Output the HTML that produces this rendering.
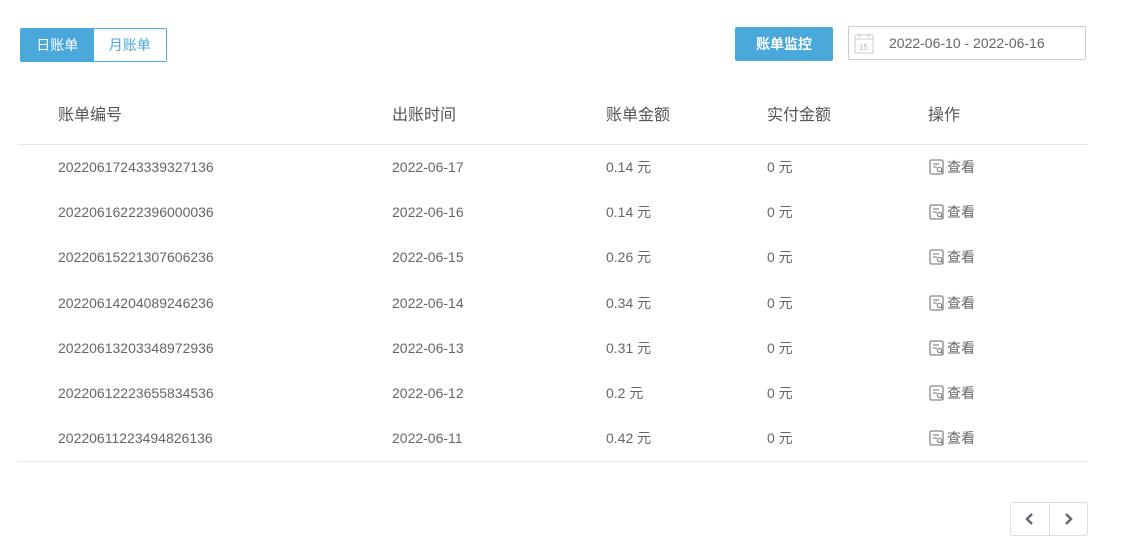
<!DOCTYPE html>
<html><head><meta charset="utf-8"><style>
*{margin:0;padding:0;box-sizing:border-box}
body{width:1134px;height:550px;background:#fff;font-family:"Liberation Sans","Noto Sans CJK SC",sans-serif;position:relative;overflow:hidden;color:#666}
.abs{position:absolute}
.tabs{left:20px;top:28px;width:147px;height:34px;border:1px solid #4aa9da;border-radius:2px;display:flex;font-size:14px}
.tabs div{flex:1;display:flex;align-items:center;justify-content:center}
.t1{background:#4aa9da;color:#fff}
.t2{color:#4aa9da}
.btn{left:735px;top:27px;width:98px;height:34px;background:#4aa9da;color:#fff;border-radius:2px;font-size:14px;font-weight:bold;display:flex;align-items:center;justify-content:center}
.date{left:848px;top:26px;width:238px;height:34px;border:1px solid #ccc;border-radius:2px;font-size:14px;color:#666}
.date span{position:absolute;left:40px;top:8px}
.hline{left:18px;width:1070px;height:1px;background:#e8e8e8}
.row{position:absolute;left:0;width:1134px;font-size:14px;color:#666;height:20px;line-height:20px}
.row div{position:absolute;top:0;height:20px;line-height:20px;white-space:nowrap}
.hd{font-size:16px;color:#555}
.c1{left:58px}.c2{left:392px}.c3{left:606px}.c4{left:767px}.c5{left:929px}
.ico{display:inline-block;vertical-align:-3px;margin-right:2px}
.pg{left:1010px;top:502px;width:78px;height:34px;border:1px solid #ddd;border-radius:3px;display:flex}
.pg div{flex:1;display:flex;align-items:center;justify-content:center}
.pg div:first-child{border-right:1px solid #ddd}
</style></head><body>
<div class="abs tabs"><div class="t1">日账单</div><div class="t2">月账单</div></div>
<div class="abs btn">账单监控</div>
<div class="abs date">
<svg class="abs" style="left:5px;top:5px" width="20" height="22" viewBox="0 0 20 22"><rect x="1" y="3" width="18" height="18" fill="none" stroke="#ccc"/><line x1="1" y1="7" x2="19" y2="7" stroke="#ccc"/><line x1="5" y1="1" x2="5" y2="5" stroke="#ccc"/><line x1="15" y1="1" x2="15" y2="5" stroke="#ccc"/><text x="5" y="18" font-size="8" fill="#bbb" font-family="Liberation Sans">15</text></svg>
<span>2022-06-10 - 2022-06-16</span></div>
<div class="row hd" style="top:106px"><div class="c1">账单编号</div><div class="c2">出账时间</div><div class="c3">账单金额</div><div class="c4">实付金额</div><div class="c5" style="left:928px">操作</div></div>
<div class="abs hline" style="top:144px"></div>
<div class="abs hline" style="top:461px"></div>
<div id="rows"></div>
<div class="abs pg"><div><svg width="10" height="12"><path d="M7 1L2 6L7 11" fill="none" stroke="#667" stroke-width="2.5"/></svg></div><div><svg width="10" height="12"><path d="M3 1L8 6L3 11" fill="none" stroke="#667" stroke-width="2.5"/></svg></div></div>
<script>
var d=[["20220617243339327136","2022-06-17","0.14 元"],["20220616222396000036","2022-06-16","0.14 元"],["20220615221307606236","2022-06-15","0.26 元"],["20220614204089246236","2022-06-14","0.34 元"],["20220613203348972936","2022-06-13","0.31 元"],["20220612223655834536","2022-06-12","0.2 元"],["20220611223494826136","2022-06-11","0.42 元"]];
var ic='<svg class="ico" width="16" height="16" viewBox="0 0 16 16"><rect x="1" y="1" width="13" height="14" rx="1.5" fill="none" stroke="#888" stroke-width="1.3"/><line x1="4" y1="5" x2="10" y2="5" stroke="#888" stroke-width="1.2"/><line x1="4" y1="8" x2="8" y2="8" stroke="#888" stroke-width="1.2"/><circle cx="10.5" cy="10.5" r="2.2" fill="#fff" stroke="#888" stroke-width="1.2"/><line x1="12" y1="12" x2="14.5" y2="14.5" stroke="#888" stroke-width="1.3"/></svg>';
var h='';d.forEach(function(r,i){var t=157+i*45.2;h+='<div class="row" style="top:'+t+'px"><div class="c1">'+r[0]+'</div><div class="c2">'+r[1]+'</div><div class="c3">'+r[2]+'</div><div class="c4">0 元</div><div class="c5">'+ic+'查看</div></div>';});
document.getElementById('rows').innerHTML=h;
</script>
</body></html>
